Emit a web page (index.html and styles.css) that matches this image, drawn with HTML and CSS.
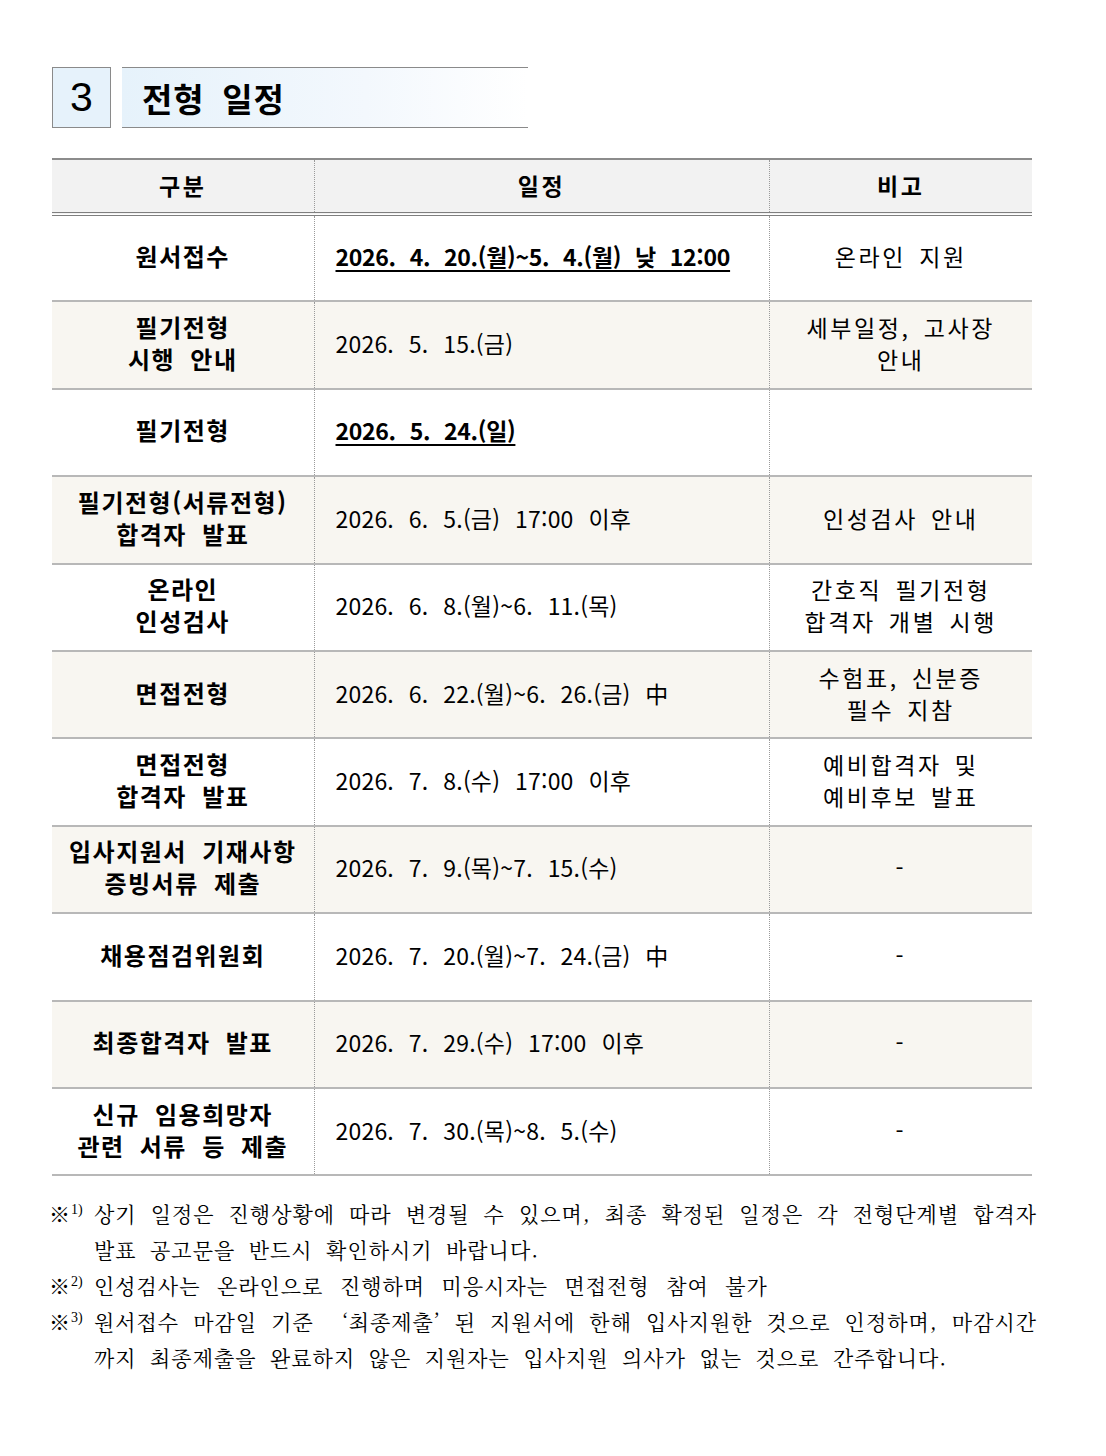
FILE: index.html
```html
<!DOCTYPE html>
<html lang="ko">
<head>
<meta charset="utf-8">
<link rel="stylesheet" href="styles.css">
</head>
<body>
<div class="page">
  <div class="section-head">
    <div class="num">3</div>
    <div class="title">전형 일정</div>
  </div>

  <table class="sched">
    <colgroup>
      <col class="c1"><col class="c2"><col class="c3">
    </colgroup>
    <thead>
      <tr><th>구분</th><th>일정</th><th>비고</th></tr>
    </thead>
    <tbody>
      <tr>
        <td class="k">원서접수</td>
        <td class="d"><span class="hl">2026.&nbsp; 4.&nbsp; 20.(월)~5.&nbsp; 4.(월)&nbsp; 낮&nbsp; 12:00</span></td>
        <td class="n">온라인 지원</td>
      </tr>
      <tr class="alt">
        <td class="k">필기전형<br>시행 안내</td>
        <td class="d">2026.&nbsp; 5.&nbsp; 15.(금)</td>
        <td class="n">세부일정, 고사장<br>안내</td>
      </tr>
      <tr>
        <td class="k">필기전형</td>
        <td class="d"><span class="hl">2026.&nbsp; 5.&nbsp; 24.(일)</span></td>
        <td class="n"></td>
      </tr>
      <tr class="alt">
        <td class="k">필기전형(서류전형)<br>합격자 발표</td>
        <td class="d">2026.&nbsp; 6.&nbsp; 5.(금)&nbsp; 17:00&nbsp; 이후</td>
        <td class="n">인성검사 안내</td>
      </tr>
      <tr>
        <td class="k">온라인<br>인성검사</td>
        <td class="d">2026.&nbsp; 6.&nbsp; 8.(월)~6.&nbsp; 11.(목)</td>
        <td class="n">간호직 필기전형<br>합격자 개별 시행</td>
      </tr>
      <tr class="alt">
        <td class="k">면접전형</td>
        <td class="d">2026.&nbsp; 6.&nbsp; 22.(월)~6.&nbsp; 26.(금)&nbsp; 中</td>
        <td class="n">수험표, 신분증<br>필수 지참</td>
      </tr>
      <tr>
        <td class="k">면접전형<br>합격자 발표</td>
        <td class="d">2026.&nbsp; 7.&nbsp; 8.(수)&nbsp; 17:00&nbsp; 이후</td>
        <td class="n">예비합격자 및<br>예비후보 발표</td>
      </tr>
      <tr class="alt">
        <td class="k">입사지원서 기재사항<br>증빙서류 제출</td>
        <td class="d">2026.&nbsp; 7.&nbsp; 9.(목)~7.&nbsp; 15.(수)</td>
        <td class="n">-</td>
      </tr>
      <tr>
        <td class="k">채용점검위원회</td>
        <td class="d">2026.&nbsp; 7.&nbsp; 20.(월)~7.&nbsp; 24.(금)&nbsp; 中</td>
        <td class="n">-</td>
      </tr>
      <tr class="alt">
        <td class="k">최종합격자 발표</td>
        <td class="d">2026.&nbsp; 7.&nbsp; 29.(수)&nbsp; 17:00&nbsp; 이후</td>
        <td class="n">-</td>
      </tr>
      <tr>
        <td class="k">신규 임용희망자<br>관련 서류 등 제출</td>
        <td class="d">2026.&nbsp; 7.&nbsp; 30.(목)~8.&nbsp; 5.(수)</td>
        <td class="n">-</td>
      </tr>
    </tbody>
  </table>

  <div class="notes">
    <div class="note">
      <span class="mark">※<sup>1)</sup></span>
      <div class="body">
        <span class="ln full">상기 일정은 진행상황에 따라 변경될 수 있으며, 최종 확정된 일정은 각 전형단계별 합격자</span>
        <span class="ln">발표 공고문을 반드시 확인하시기 바랍니다.</span>
      </div>
    </div>
    <div class="note">
      <span class="mark">※<sup>2)</sup></span>
      <div class="body">
        <span class="ln wide">인성검사는 온라인으로 진행하며 미응시자는 면접전형 참여 불가</span>
      </div>
    </div>
    <div class="note">
      <span class="mark">※<sup>3)</sup></span>
      <div class="body">
        <span class="ln full">원서접수 마감일 기준 &nbsp;‘최종제출’ 된 지원서에 한해 입사지원한 것으로 인정하며, 마감시간</span>
        <span class="ln">까지 최종제출을 완료하지 않은 지원자는 입사지원 의사가 없는 것으로 간주합니다.</span>
      </div>
    </div>
  </div>
</div>
</body>
</html>
```

FILE: styles.css
```css
html, body {
  margin: 0;
  padding: 0;
  background: #ffffff;
}

body {
  font-family: "Noto Sans CJK KR", "Noto Sans", sans-serif;
  color: #000;
}

.page {
  padding: 67px 0 0 52px;
  width: 990px;
}

.section-head {
  display: flex;
  align-items: stretch;
  height: 61px;
  gap: 11px;
}

.num {
  width: 59px;
  box-sizing: border-box;
  border: 1px solid #8a8a8a;
  background: #e6f2fb;
  display: flex;
  align-items: center;
  justify-content: center;
  font-family: "Liberation Sans", Arial, sans-serif;
  font-size: 41px;
  line-height: 1;
}

.title {
  width: 406px;
  box-sizing: border-box;
  border-top: 1px solid #8a8a8a;
  border-bottom: 1px solid #8a8a8a;
  background: linear-gradient(to right, #e6f2fb 0%, #f3f8fd 60%, #ffffff 100%);
  display: flex;
  align-items: center;
  padding-left: 20px;
  font-size: 33px;
  font-weight: 700;
  word-spacing: 8px;
  letter-spacing: 0.8px;
}

.sched {
  margin-top: 30px;
  width: 980px;
  border-collapse: collapse;
  table-layout: fixed;
  font-size: 23px;
}

.c1 { width: 262px; }
.c2 { width: 455px; }
.c3 { width: 263px; }

.sched thead tr {
  background: #f2f2f2;
  border-top: 2px solid #8c8c8c;
  border-bottom: 4px double #7f7f7f;
}

.sched th {
  height: 49px;
  font-weight: 700;
  font-size: 23px;
  letter-spacing: 2.5px;
  text-align: center;
  vertical-align: middle;
  padding: 0 0 3px 0;
}

.sched th + th,
.sched td + td {
  border-left: 1px dotted #9a9a9a;
}

.sched tbody tr {
  height: 87.4px;
  border-bottom: 2px solid #b8b8b8;
}

.sched tbody tr.alt {
  background: #f8f6f1;
}

.sched td {
  padding: 0 0 4px 0;
  vertical-align: middle;
  line-height: 32px;
}

.sched td.k {
  text-align: center;
  font-weight: 700;
  font-size: 24px;
  letter-spacing: 1.5px;
  word-spacing: 7px;
}

.sched td.d {
  text-align: left;
  padding-left: 21px;
  letter-spacing: 0.2px;
  word-spacing: 0.8px;
}

.sched td.n {
  text-align: center;
  letter-spacing: 2.6px;
  word-spacing: 4px;
}

.hl {
  font-weight: 700;
  text-decoration: underline;
  text-decoration-thickness: 2px;
  text-underline-offset: 4px;
  letter-spacing: -0.3px;
}

.notes {
  margin-top: 19px;
  font-family: "Noto Serif CJK KR", "Noto Sans CJK KR", serif;
  font-size: 21px;
  line-height: 36px;
  width: 988px;
  margin-left: -3px;
}

.note {
  display: flex;
}

.mark {
  flex: none;
  width: 45px;
  height: 36px;
  white-space: nowrap;
}

.mark sup {
  font-family: "Liberation Serif", serif;
  font-size: 14px;
  line-height: 0;
  vertical-align: 0;
  position: relative;
  top: -8px;
  margin-left: 1px;
}

.body {
  flex: 1;
}

.ln {
  display: block;
  height: 36px;
  text-align: left;
  letter-spacing: 1px;
  word-spacing: 6px;
}

.ln.wide {
  word-spacing: 9px;
}

.ln.full {
  text-align: justify;
  text-align-last: justify;
  word-spacing: 3px;
}
```
